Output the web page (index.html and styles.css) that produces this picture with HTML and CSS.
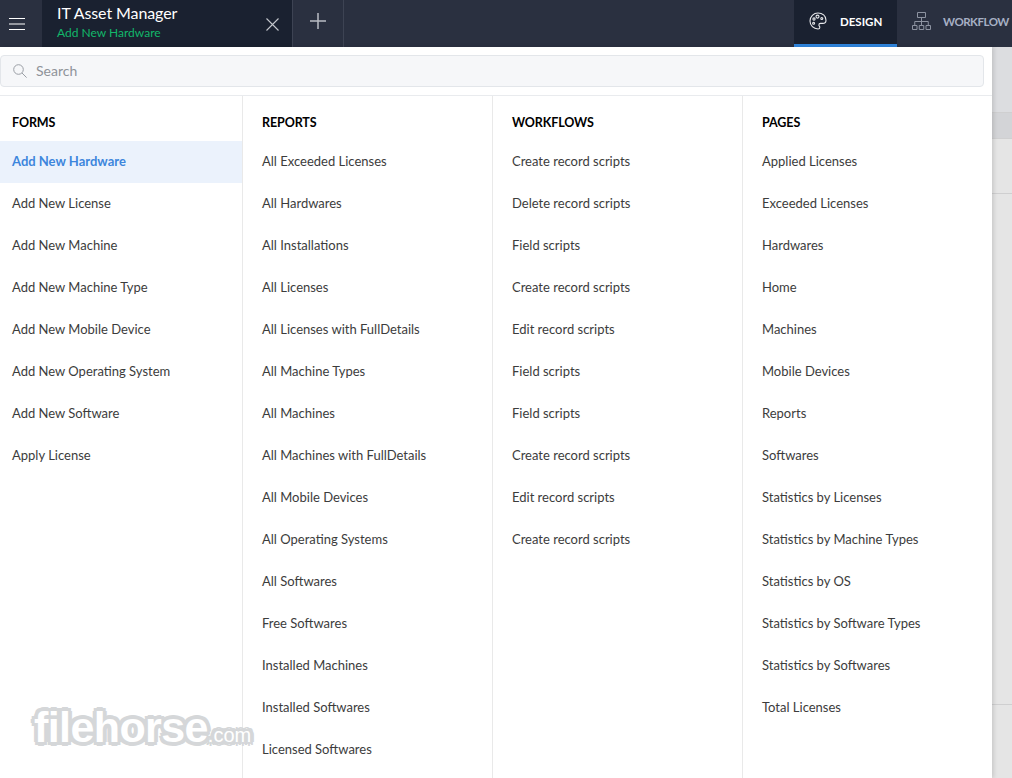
FILE: index.html
```html
<!DOCTYPE html>
<html lang="en">
<head>
<meta charset="utf-8">
<title>IT Asset Manager</title>
<link rel="stylesheet" href="styles.css">
</head>
<body>
<header class="topbar">
  <button class="menu-btn" aria-label="Menu">
    <svg width="16" height="12" viewBox="0 0 16 12"><path d="M0 .5h16M0 6h16M0 11.500h16" stroke="#fff" stroke-width="1" fill="none"/></svg>
  </button>
  <div class="app-tab">
    <div class="app-titles">
      <div class="app-name">IT Asset Manager</div>
      <div class="app-sub">Add New Hardware</div>
    </div>
    <svg class="close-icon" width="13" height="13" viewBox="0 0 13 13"><path d="M.5.5l12 12M12.5.5l-12 12" stroke="#c3c6cc" stroke-width="1.100" fill="none"/></svg>
  </div>
  <div class="add-tab">
    <svg width="16" height="16" viewBox="0 0 16 16"><path d="M8 0v16M0 8h16" stroke="#b9bcc3" stroke-width="1.500" fill="none"/></svg>
  </div>
  <div class="spacer"></div>
  <div class="mode-tab active">
    <svg width="18" height="18" viewBox="0 0 18 18" fill="none" stroke="#e6e7ea" stroke-width="1.100"><path d="M9 1C4.600 1 1 4.500 1 9s3.600 8 8 8c1.300 0 1.800-.8 1.800-1.600 0-1.200-.9-1.400-.9-2.500 0-.9.7-1.500 1.600-1.500h2.300c2 0 3.200-1.400 3.200-3.200C17 3.700 13.400 1 9 1z"/><circle cx="5" cy="7" r="1.100"/><circle cx="4.600" cy="11.300" r="1"/><circle cx="8.500" cy="4.600" r="1.500"/><circle cx="12.800" cy="6.500" r="1"/></svg>
    <span>DESIGN</span>
  </div>
  <div class="mode-tab">
    <svg width="19" height="18" viewBox="0 0 19 18" fill="none" stroke="#8d93a1" stroke-width="1"><path d="M5.500.5h8v5h-8zM.5 13.500h4.500v4h-4.500zM7.250 13.500h4.500v4h-4.500zM14 13.500h4.500v4H14zM9.500 5.500v8M2.750 13.500v-4h13.500v4"/></svg>
    <span>WORKFLOW</span>
  </div>
</header>

<div class="backdrop">
  <div class="bd-row bd-a"></div>
  <div class="bd-row bd-b"></div>
  <div class="bd-row bd-c"></div>
  <div class="bd-row bd-d"></div>
  <div class="bd-row bd-e"></div>
</div>

<main class="panel">
  <div class="search-wrap">
    <div class="search">
      <svg width="14" height="14" viewBox="0 0 14 14" fill="none" stroke="#9a9ea5" stroke-width="1"><circle cx="5.500" cy="5.500" r="4.800"/><path d="M9 9l4.600 4.600"/></svg>
      <span>Search</span>
    </div>
  </div>
  <div class="columns">
    <section class="col col-forms">
      <h2>FORMS</h2>
      <ul>
        <li class="selected">Add New Hardware</li>
        <li>Add New License</li>
        <li>Add New Machine</li>
        <li>Add New Machine Type</li>
        <li>Add New Mobile Device</li>
        <li>Add New Operating System</li>
        <li>Add New Software</li>
        <li>Apply License</li>
      </ul>
    </section>
    <section class="col">
      <h2>REPORTS</h2>
      <ul>
        <li>All Exceeded Licenses</li>
        <li>All Hardwares</li>
        <li>All Installations</li>
        <li>All Licenses</li>
        <li>All Licenses with FullDetails</li>
        <li>All Machine Types</li>
        <li>All Machines</li>
        <li>All Machines with FullDetails</li>
        <li>All Mobile Devices</li>
        <li>All Operating Systems</li>
        <li>All Softwares</li>
        <li>Free Softwares</li>
        <li>Installed Machines</li>
        <li>Installed Softwares</li>
        <li>Licensed Softwares</li>
      </ul>
    </section>
    <section class="col">
      <h2>WORKFLOWS</h2>
      <ul>
        <li>Create record scripts</li>
        <li>Delete record scripts</li>
        <li>Field scripts</li>
        <li>Create record scripts</li>
        <li>Edit record scripts</li>
        <li>Field scripts</li>
        <li>Field scripts</li>
        <li>Create record scripts</li>
        <li>Edit record scripts</li>
        <li>Create record scripts</li>
      </ul>
    </section>
    <section class="col col-last">
      <h2>PAGES</h2>
      <ul>
        <li>Applied Licenses</li>
        <li>Exceeded Licenses</li>
        <li>Hardwares</li>
        <li>Home</li>
        <li>Machines</li>
        <li>Mobile Devices</li>
        <li>Reports</li>
        <li>Softwares</li>
        <li>Statistics by Licenses</li>
        <li>Statistics by Machine Types</li>
        <li>Statistics by OS</li>
        <li>Statistics by Software Types</li>
        <li>Statistics by Softwares</li>
        <li>Total Licenses</li>
      </ul>
    </section>
  </div>
</main>

<div class="watermark"><span class="wm-main">filehorse</span><span class="wm-com">.com</span></div>
</body>
</html>
```

FILE: styles.css
```css
* { box-sizing: border-box; }
html, body { height: 100%; }
body {
  margin: 0;
  overflow: hidden;
  position: relative;
  background: #e5e5e5;
  font-family: "Lato", "Liberation Sans", sans-serif;
  color: #333;
}
svg { flex: none; }
.topbar {
  display: flex;
  align-items: stretch;
  height: 47px;
  background: #2a3040;
  color: #fff;
}
.menu-btn {
  width: 42px;
  padding: 0 0 0 9px;
  border: 0;
  background: transparent;
  display: flex;
  align-items: center;
  justify-content: flex-start;
}
.app-tab {
  width: 250px;
  display: flex;
  align-items: center;
  justify-content: space-between;
  padding: 0 13px 0 15px;
  background: #1a2130;
}
.app-titles { margin-top: -2px; }
.app-name { font-size: 16px; line-height: 20px; letter-spacing: -.1px; }
.app-sub { font-size: 12px; line-height: 18px; margin-top: 1px; color: #12b76a; }
.close-icon { margin-top: 1px; }
.add-tab {
  width: 52px;
  display: flex;
  align-items: center;
  justify-content: center;
  border-left: 1px solid #3d4353;
  border-right: 1px solid #3d4353;
  padding-bottom: 6px;
}
.spacer { flex: 1; }
.mode-tab {
  display: flex;
  align-items: center;
  gap: 12px;
  padding: 0 0 5px 15px;
  font-size: 11.5px;
  font-weight: 700;
  letter-spacing: -.5px;
  color: #a6afc4;
  flex: none;
}
.mode-tab.active {
  width: 103px;
  background: #1a2130;
  color: #fff;
  border-bottom: 3px solid #2f84dc;
  gap: 13px;
  padding-bottom: 2px;
  letter-spacing: 0;
}
.mode-tab:last-child { width: 115px; }
.backdrop {
  height: 731px;
  display: flex;
  flex-direction: column;
}
.bd-row { border-bottom: 1px solid #cfcfd0; }
.bd-a { height: 66px; background: #dcdde0; }
.bd-b { height: 26px; background: #d3d4d7; }
.bd-c { height: 55px; background: #e5e5e5; }
.bd-d { height: 511px; background: #e5e5e5; }
.bd-e { flex: 1; background: #e5e5e5; border-bottom: 0; }
.panel {
  position: absolute;
  top: 47px;
  left: 0;
  bottom: 0;
  width: 992px;
  background: #fff;
  box-shadow: 2px 0 4px rgba(0, 0, 0, .12);
  display: flex;
  flex-direction: column;
  overflow: hidden;
}
.search-wrap {
  padding: 8px 8px 8px 0;
  border-bottom: 1px solid #e9ebee;
}
.search {
  height: 32px;
  display: flex;
  align-items: center;
  gap: 9px;
  padding: 0 0 2px 12px;
  background: #f6f7f9;
  border: 1px solid #e3e6ea;
  border-radius: 4px;
  font-size: 14px;
  color: #8f9399;
}
.search svg { margin-top: 2px; }
.columns { display: flex; flex: 1; }
.col {
  width: 250px;
  border-right: 1px solid #e9e9e9;
}
.col-forms { width: 243px; }
.col-last { width: 249px; border-right: 0; }
.col h2 {
  margin: 0;
  height: 45px;
  padding: 7px 0 0 19px;
  display: flex;
  align-items: center;
  font-size: 12.5px;
  font-weight: 700;
  letter-spacing: -.1px;
  color: #000;
}
.col-forms h2 { padding-left: 12px; }
.col ul { list-style: none; margin: 0; padding: 0; }
.col li {
  height: 42px;
  line-height: 40px;
  padding-left: 19px;
  font-size: 13px;
  color: #3c3c3c;
  white-space: nowrap;
}
.col-forms li { padding-left: 12px; }
.col li.selected {
  background: #ebf2fc;
  color: #3d86dc;
  font-weight: 700;
}
.watermark {
  position: absolute;
  left: 34px;
  top: 703px;
  white-space: nowrap;
  font-family: "Liberation Sans", sans-serif;
  font-weight: 700;
  color: #fff;
  line-height: 48px;
  height: 48px;
  text-shadow: 0 0 2px #d5d7d9, 2px 0 0 #d5d7d9, -2px 0 0 #d5d7d9, 0 2px 0 #d5d7d9, 0 -2px 0 #d5d7d9, 2px 2px 0 #d5d7d9, -2px -2px 0 #d5d7d9, 2px -2px 0 #d5d7d9, -2px 2px 0 #d5d7d9, 4px 0 0 #d5d7d9, -4px 0 0 #d5d7d9, 0 4px 0 #d5d7d9, 0 -4px 0 #d5d7d9, 3px 3px 0 #d5d7d9, -3px -3px 0 #d5d7d9, 3px -3px 0 #d5d7d9, -3px 3px 0 #d5d7d9;
}
.wm-main { font-size: 43px; letter-spacing: -.6px; }
.wm-com { font-size: 20px; font-weight: 400; }
```
